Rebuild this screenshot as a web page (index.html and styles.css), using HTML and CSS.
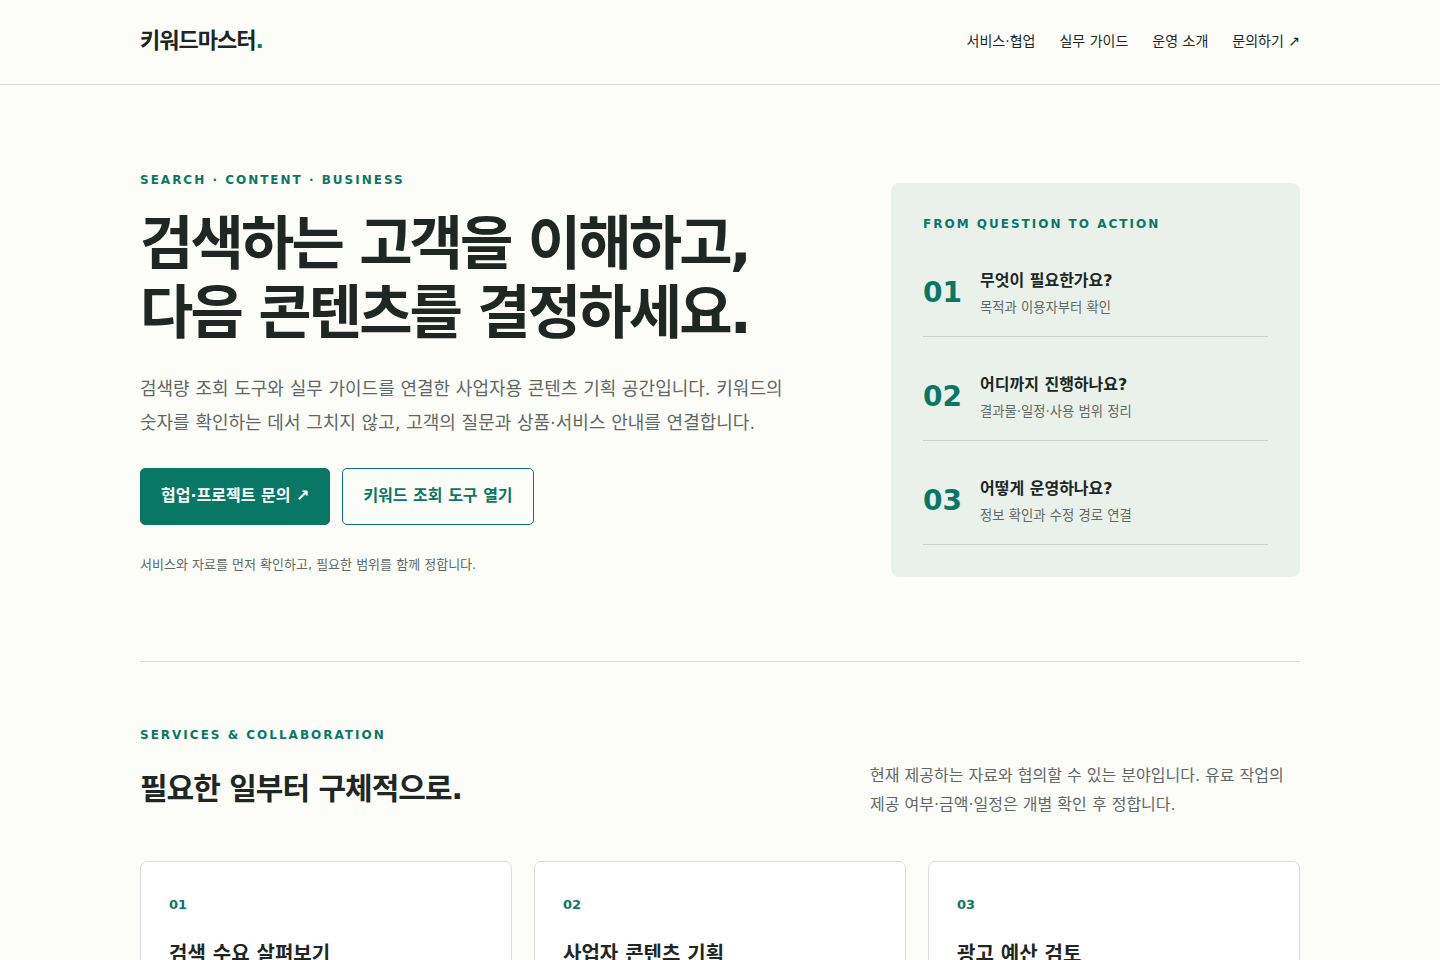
FILE: index.html
```html
<!DOCTYPE html>
<html lang="ko">
<head>
<meta charset="utf-8">
<meta name="viewport" content="width=device-width, initial-scale=1">
<title>키워드마스터</title>
<link rel="stylesheet" href="styles.css">
</head>
<body>
<header class="site-header">
  <div class="wrap header-inner">
    <a class="brand" href="#">키워드마스터<span class="dot">.</span></a>
    <nav class="nav">
      <a href="#services">서비스·협업</a>
      <a href="#guide">실무 가이드</a>
      <a href="#about">운영 소개</a>
      <a href="#contact">문의하기 ↗</a>
    </nav>
  </div>
</header>
<main class="wrap">
  <section class="hero">
    <div class="hero-copy">
      <p class="eyebrow">SEARCH · CONTENT · BUSINESS</p>
      <h1>검색하는 고객을 이해하고,<br>다음 콘텐츠를 결정하세요.</h1>
      <p class="lead">검색량 조회 도구와 실무 가이드를 연결한 사업자용 콘텐츠 기획 공간입니다. 키워드의 숫자를 확인하는 데서 그치지 않고, 고객의 질문과 상품·서비스 안내를 연결합니다.</p>
      <div class="actions">
        <a class="button primary" href="#contact">협업·프로젝트 문의 ↗</a>
        <a class="button" href="#tool">키워드 조회 도구 열기</a>
      </div>
      <p class="note">서비스와 자료를 먼저 확인하고, 필요한 범위를 함께 정합니다.</p>
    </div>
    <aside class="panel">
      <p class="eyebrow">FROM QUESTION TO ACTION</p>
      <div class="steps">
        <div class="step"><b>01</b><div class="step-text"><strong>무엇이 필요한가요?</strong><small>목적과 이용자부터 확인</small></div></div>
        <div class="step"><b>02</b><div class="step-text"><strong>어디까지 진행하나요?</strong><small>결과물·일정·사용 범위 정리</small></div></div>
        <div class="step"><b>03</b><div class="step-text"><strong>어떻게 운영하나요?</strong><small>정보 확인과 수정 경로 연결</small></div></div>
      </div>
    </aside>
  </section>
  <section class="services" id="services">
    <p class="eyebrow">SERVICES &amp; COLLABORATION</p>
    <div class="section-head">
      <h2>필요한 일부터 구체적으로.</h2>
      <p>현재 제공하는 자료와 협의할 수 있는 분야입니다. 유료 작업의 제공 여부·금액·일정은 개별 확인 후 정합니다.</p>
    </div>
    <div class="cards">
      <article class="card"><span class="num">01</span><h3>검색 수요 살펴보기</h3></article>
      <article class="card"><span class="num">02</span><h3>사업자 콘텐츠 기획</h3></article>
      <article class="card"><span class="num">03</span><h3>광고 예산 검토</h3></article>
    </div>
  </section>
</main>
</body>
</html>
```
FILE: styles.css
```css
:root {
  --ink: #202624;
  --muted: #5f6865;
  --green: #087864;
  --line: #d9dedb;
  --paper: #fcfdf8;
}
* { box-sizing: border-box; }
body {
  margin: 0;
  background: var(--paper);
  color: var(--ink);
  font-family: "DejaVu Sans", "Noto Sans CJK KR", sans-serif;
  font-size: 16px;
  line-height: 28px;
  word-break: keep-all;
}
h1, h2, h3, p { margin: 0; }
a { color: inherit; text-decoration: none; }
.wrap { width: calc(100% - 48px); max-width: 1160px; margin: 0 auto; }
.site-header { border-bottom: 1px solid var(--line); }
.header-inner { display: flex; align-items: center; justify-content: space-between; min-height: 84px; padding-bottom: 2px; }
.brand { font-size: 22px; font-weight: 700; letter-spacing: -1px; }
.dot { color: var(--green); }
.nav { display: flex; gap: 24px; font-size: 14px; }
.hero {
  display: grid;
  grid-template-columns: minmax(0, 1fr) 409px;
  gap: 72px;
  align-items: end;
  padding: 84px 0;
  border-bottom: 1px solid var(--line);
}
.eyebrow { color: var(--green); font-size: 12px; font-weight: 700; line-height: 22px; letter-spacing: 2px; }
h1 { margin-top: 19px; font-size: 58px; line-height: 69px; letter-spacing: -0.05em; }
.lead { margin-top: 24px; color: var(--muted); font-size: 18px; line-height: 34px; }
.actions { display: flex; flex-wrap: wrap; gap: 12px; margin-top: 28px; }
.button { padding: 12px 20px 14px; border: 1px solid var(--green); border-radius: 5px; color: var(--green); font-weight: 700; line-height: 29px; }
.primary { background: var(--green); color: #fff; }
.note { margin-top: 28px; color: var(--muted); font-size: 13px; line-height: 24px; }
.panel { padding: 30px 32px 32px; border-radius: 8px; background: #eaf1eb; }
.steps { display: grid; gap: 16px; margin-top: 14px; }
.step { display: flex; align-items: center; gap: 18px; padding: 16px 0; border-bottom: 1px solid #c8d1cb; }
.step b { color: var(--green); font-size: 28px; }
.step-text { padding-top: 2px; }
.step strong, .step small { display: block; }
.step strong { line-height: 28px; }
.step small { color: var(--muted); font-size: smaller; line-height: 25px; }
.services { padding: 62px 0; }
.section-head { display: grid; grid-template-columns: minmax(0, 1fr) 430px; align-items: center; margin-top: 15px; }
h2 { padding-bottom: 2px; font-size: 30px; line-height: 44px; letter-spacing: -1px; }
.section-head p { color: var(--muted); line-height: 29px; }
.cards { display: grid; grid-template-columns: repeat(3, minmax(0, 1fr)); gap: 22px; margin-top: 42px; }
.card { padding: 28px; border: 1px solid var(--line); border-radius: 7px; background: #fff; }
.num { display: block; color: var(--green); font-size: 13px; font-weight: 700; line-height: 30px; }
h3 { margin-top: 19px; font-size: 20px; line-height: 30px; }
```
